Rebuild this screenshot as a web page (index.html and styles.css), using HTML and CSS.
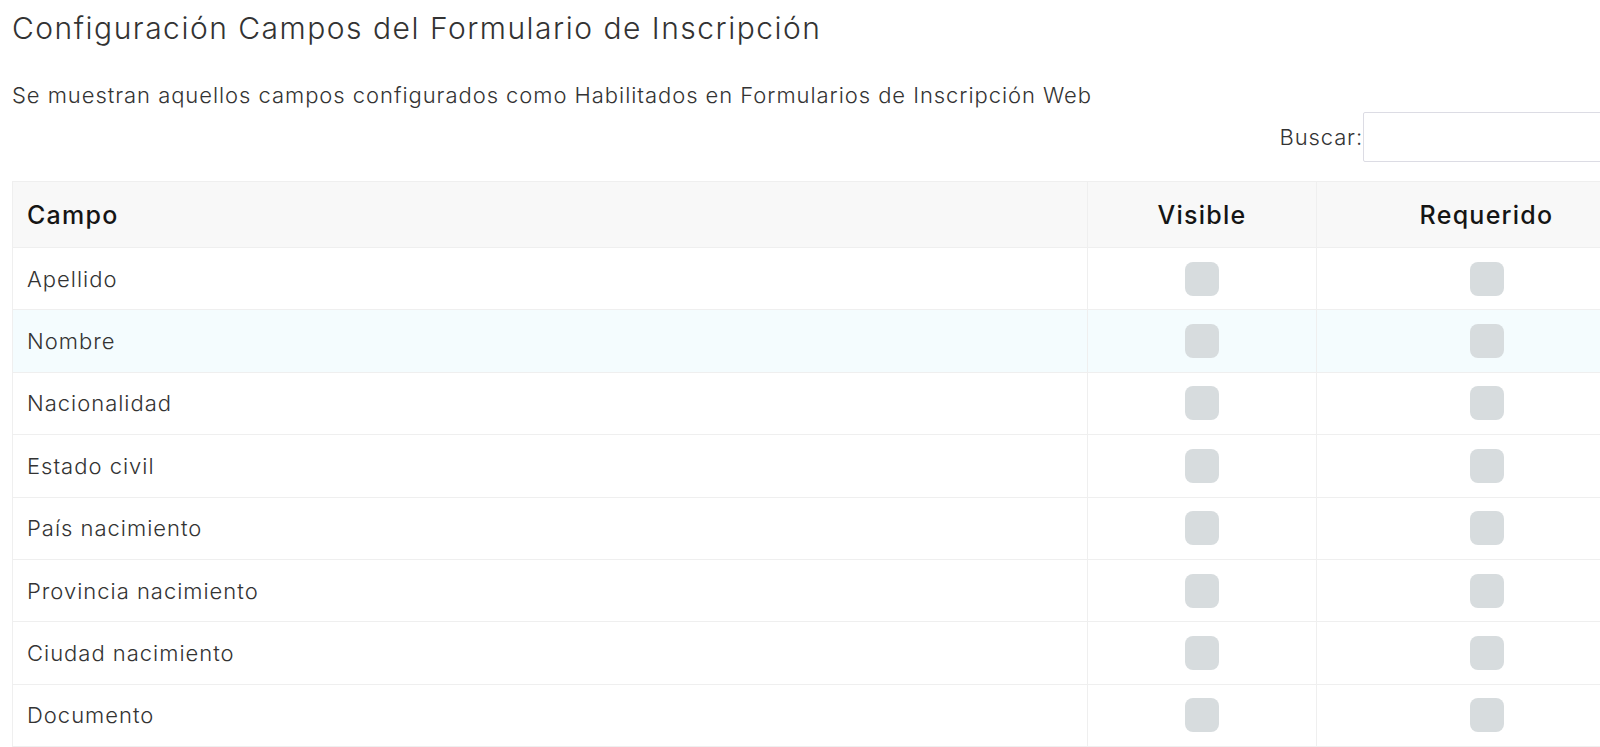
FILE: index.html
```html
<!DOCTYPE html>
<html lang="es">
<head>
  <meta charset="UTF-8">
  <title>Configuración Campos del Formulario de Inscripción</title>
  <link rel="stylesheet" href="styles.css">
</head>
<body>
<div class="page">
  <h1 class="page-title">Configuración Campos del Formulario de Inscripción</h1>
  <p class="page-desc">Se muestran aquellos campos configurados como Habilitados en Formularios de Inscripción Web</p>

  <div class="search-row">
    <label for="buscar">Buscar:</label>
    <input type="search" id="buscar">
  </div>

  <table class="fields-table">
    <colgroup>
      <col class="col-campo">
      <col class="col-check">
      <col class="col-check-wide">
    </colgroup>
    <thead>
      <tr>
        <th>Campo</th>
        <th class="center">Visible</th>
        <th class="center">Requerido</th>
      </tr>
    </thead>
    <tbody>
      <tr>
        <td>Apellido</td>
        <td class="center"><span class="check"></span></td>
        <td class="center"><span class="check"></span></td>
      </tr>
      <tr class="hover">
        <td>Nombre</td>
        <td class="center"><span class="check"></span></td>
        <td class="center"><span class="check"></span></td>
      </tr>
      <tr>
        <td>Nacionalidad</td>
        <td class="center"><span class="check"></span></td>
        <td class="center"><span class="check"></span></td>
      </tr>
      <tr>
        <td>Estado civil</td>
        <td class="center"><span class="check"></span></td>
        <td class="center"><span class="check"></span></td>
      </tr>
      <tr>
        <td>País nacimiento</td>
        <td class="center"><span class="check"></span></td>
        <td class="center"><span class="check"></span></td>
      </tr>
      <tr>
        <td>Provincia nacimiento</td>
        <td class="center"><span class="check"></span></td>
        <td class="center"><span class="check"></span></td>
      </tr>
      <tr>
        <td>Ciudad nacimiento</td>
        <td class="center"><span class="check"></span></td>
        <td class="center"><span class="check"></span></td>
      </tr>
      <tr>
        <td>Documento</td>
        <td class="center"><span class="check"></span></td>
        <td class="center"><span class="check"></span></td>
      </tr>
    </tbody>
  </table>
</div>
</body>
</html>
```

FILE: styles.css
```css
:root {
  --text: #333333;
  --text-strong: #151515;
  --border: #efefef;
  --head-bg: #f8f8f8;
  --hover-bg: #f4fcfe;
  --check: #d7dcde;
}

* {
  margin: 0;
  padding: 0;
  box-sizing: border-box;
}

html, body {
  overflow: hidden;
}

body {
  font-family: Inter, "Open Sans", sans-serif;
  color: var(--text);
  background: white;
}

.page {
  padding: 0 12px;
  width: 1668px;
}

.page-title {
  font-size: 30px;
  font-weight: 300;
  line-height: normal;
  letter-spacing: 0.05em;
  margin-top: 10px;
  color: var(--text);
}

.page-desc {
  font-size: 22px;
  font-weight: 300;
  letter-spacing: 0.043em;
  margin-top: 36px;
}

.search-row {
  display: flex;
  justify-content: flex-end;
  align-items: center;
  width: 1588px;
  margin-top: 4px;
}

.search-row label {
  font-size: 22px;
  font-weight: 300;
  letter-spacing: 0.04em;
}

.search-row input {
  flex: 0 0 272px;
  height: 50px;
  margin-right: -35px;
  border: 1px solid #dcdce4;
  border-radius: 2px;
  background: white;
}

.fields-table {
  margin-top: 19px;
  width: 1644px;
  table-layout: fixed;
  border-collapse: collapse;
  border: 1px solid var(--border);
  font-size: 22px;
}

.col-campo { width: 1075px; }
.col-check { width: 229px; }
.col-check-wide { width: 340px; }

.fields-table th,
.fields-table td {
  border: 1px solid var(--border);
  text-align: left;
  padding: 0 14px;
}

.fields-table th {
  height: 66px;
  background: var(--head-bg);
  font-weight: 500;
  font-size: 25px;
  letter-spacing: 0.05em;
  color: var(--text-strong);
}

.fields-table td {
  height: 62.4px;
  font-weight: 300;
  letter-spacing: 0.045em;
}

.fields-table .center {
  text-align: center;
}

.fields-table tr.hover td {
  background: var(--hover-bg);
}

.check {
  display: inline-block;
  width: 34px;
  height: 34px;
  border-radius: 8px;
  background: var(--check);
  vertical-align: middle;
}
```
